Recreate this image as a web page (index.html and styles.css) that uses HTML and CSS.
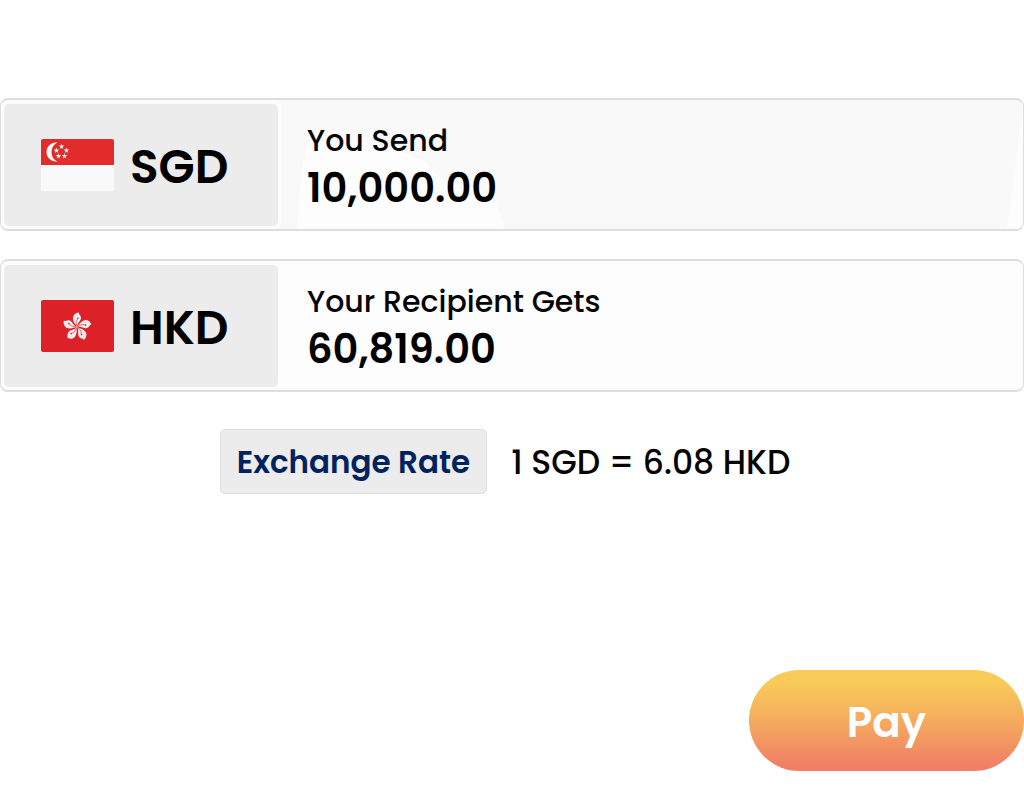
FILE: index.html
```
<!DOCTYPE html>
<html lang="en">
<head>
<meta charset="utf-8">
<meta name="viewport" content="width=device-width, initial-scale=1">
<title>Exchange</title>
<link rel="stylesheet" href="styles.css">
</head>
<body>
<main class="transfer">
  <section class="card card-send">
    <svg class="sheen" viewBox="0 0 1020 130" preserveAspectRatio="none" aria-hidden="true">
      <path d="M296 130Q299 60 307 40Q360 34 424 62Q436 86 470 88Q496 92 502 130ZM1004 130L1020 10V130Z" fill="#fdfdfd"/>
    </svg>
    <div class="currency">
      <svg class="flag" viewBox="0 0 73 52" role="img" aria-label="Singapore">
        <defs>
          <path id="star" d="M0-2.8L.7-.9H2.7L1.1.4L1.7 2.4L0 1.2L-1.7 2.4L-1.1.4L-2.7-.9H-.7Z"/>
        </defs>
        <rect width="73" height="52" rx="2" fill="#f9f9f9"/>
        <path d="M0 26V2Q0 0 2 0H71Q73 0 73 2V26Z" fill="#e32b2b"/>
        <path d="M16.500 3.500A9.600 9.600 0 1 0 16.500 22.500A10.500 10.500 0 0 1 16.500 3.500Z" fill="#fff"/>
        <g fill="#fff">
          <use href="#star" x="20.500" y="7.500"/>
          <use href="#star" x="15.500" y="11.500"/>
          <use href="#star" x="25.500" y="11.500"/>
          <use href="#star" x="17.500" y="17"/>
          <use href="#star" x="23.500" y="17"/>
        </g>
      </svg>
      <span class="code">SGD</span>
    </div>
    <div class="details">
      <div class="label">You Send</div>
      <div class="amount">10,000.00</div>
    </div>
  </section>

  <section class="card">
    <div class="currency">
      <svg class="flag" viewBox="0 0 73 52" role="img" aria-label="Hong Kong">
        <defs>
          <g id="petal">
            <path d="M0 0C-1.500-3-4.500-5.500-4-10C-3.200-13-.5-14.300 2-14.500C1.300-12.800 4-12 4-9C4-6 .3-4.500 0 0Z" fill="#f3eded"/>
            <path d="M0-1C-1.500-4-.8-6.500.8-8.500" fill="none" stroke="#dc2128" stroke-width=".6"/>
            <circle cx=".8" cy="-8.800" r=".8" fill="#dc2128"/>
          </g>
        </defs>
        <rect width="73" height="52" rx="2" fill="#dc2128"/>
        <g transform="translate(36 27)">
          <use href="#petal"/>
          <use href="#petal" transform="rotate(72)"/>
          <use href="#petal" transform="rotate(144)"/>
          <use href="#petal" transform="rotate(216)"/>
          <use href="#petal" transform="rotate(288)"/>
        </g>
      </svg>
      <span class="code">HKD</span>
    </div>
    <div class="details">
      <div class="label">Your Recipient Gets</div>
      <div class="amount">60,819.00</div>
    </div>
  </section>

  <div class="rate">
    <span class="rate-label">Exchange Rate</span>
    <span class="rate-value">1 SGD = 6.08 HKD</span>
  </div>

  <button class="pay" type="button">Pay</button>
</main>
</body>
</html>
```
FILE: styles.css
```
* {
  box-sizing: border-box;
}

body {
  margin: 0;
  background: #fff;
  color: #050505;
  font-family: Poppins, Inter, "Open Sans", sans-serif;
}

.transfer {
  display: flex;
  flex-direction: column;
  padding: 98px 0 32px;
}

.card {
  position: relative;
  display: flex;
  overflow: hidden;
  margin-bottom: 28px;
  padding: 4px 3px 3px;
  border: solid #dedede;
  border-width: 2px 1px;
  border-radius: 8px;
  background: #fdfdfd;
}

.card-send {
  background: #f9f9f9;
}

.sheen {
  position: absolute;
  inset: 0;
  width: 100%;
  height: 100%;
}

.currency {
  position: relative;
  display: flex;
  align-items: center;
  gap: 16px;
  width: 274px;
  height: 122px;
  padding-left: 37px;
  border-radius: 5px;
  background: #ececec;
  box-shadow: 0 0 0 3px #fdfdfd;
}

.flag {
  flex: none;
  width: 73px;
  height: 52px;
}

.code {
  padding-top: 4px;
  color: #000;
  font-size: 47px;
  font-weight: 600;
}

.details {
  position: relative;
  padding: 17px 0 0 29px;
}

.label {
  font-size: 30px;
  font-weight: 500;
  line-height: 40px;
}

.amount {
  color: #000;
  font-size: 40px;
  font-weight: 600;
  line-height: 54px;
}

.rate {
  display: flex;
  align-items: center;
  justify-content: center;
  gap: 24px;
  margin: 9px 0 176px;
  padding-right: 14px;
}

.rate-label {
  padding: 1px 16px 0;
  border: 1px solid #dedede;
  border-radius: 5px;
  background: #ececec;
  color: #00235f;
  font-size: 31px;
  font-weight: 600;
  line-height: 62px;
}

.rate-value {
  padding-top: 2px;
  font-size: 33px;
  font-weight: 500;
}

.pay {
  align-self: flex-end;
  width: 275px;
  height: 101px;
  padding: 3px 0 0;
  border: 0;
  border-radius: 51px;
  background: linear-gradient(#f8cb58 12%, #f5b45d 40%, #f17f66 95%);
  color: #fff;
  font-family: inherit;
  font-size: 42px;
  font-weight: 600;
}
```
